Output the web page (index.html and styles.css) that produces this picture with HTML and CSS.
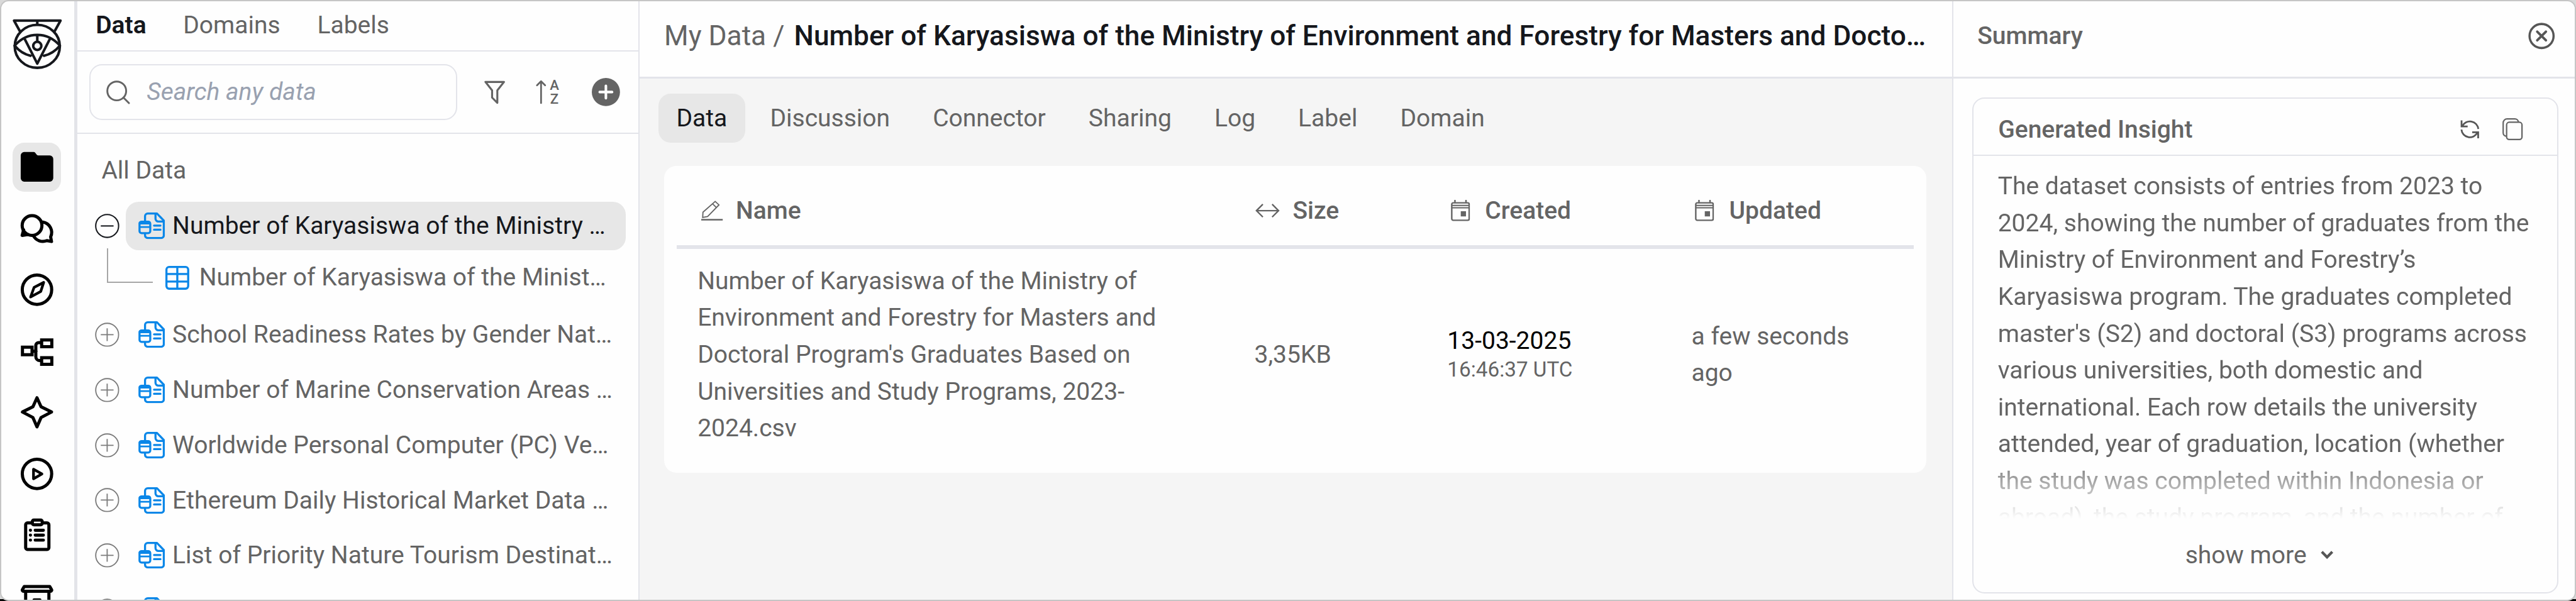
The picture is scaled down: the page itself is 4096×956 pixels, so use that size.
FILE: index.html
```html
<!DOCTYPE html>
<html lang="en">
<head>
<meta charset="utf-8">
<title>My Data</title>
<link rel="stylesheet" href="styles.css">
</head>
<body>
<svg class="defs" width="0" height="0">
  <symbol id="doc" viewBox="0 0 46 46"><g fill="none" stroke="#0b87e8" stroke-width="3.6" stroke-linecap="round" stroke-linejoin="round"><path d="M11.5 14V6.5a4.7 4.7 0 0 1 4.700-4.700H32L43.800 14v25.500a4.500 4.500 0 0 1-4.500 4.500H16a4.500 4.500 0 0 1-4.500-4.500V37"/><path d="M29.500 2.500v8a5 5 0 0 0 5 5H43"/><path d="M27 22.500h11M27 29.700h11"/><rect x="2" y="16" width="18.500" height="19.500" rx="3.500"/><path d="M3 18h16" stroke-width="5"/><path d="M3 25h16" stroke-width="3"/></g></symbol>
  <symbol id="plus" viewBox="0 0 42 42"><g fill="none" stroke="#7b7b7b" stroke-width="2"><circle cx="21" cy="21" r="19.700"/><path d="M10 21h22M21 10v22"/></g></symbol>
  <symbol id="cal" viewBox="0 0 33 37"><g fill="none" stroke="#646464" stroke-width="2.600"><rect x="1.500" y="5" width="30" height="30" rx="2.500"/><path d="M1.500 9.500h30M1.500 13.500h30" stroke-width="2"/><path d="M7 0v5M26 0v5"/></g><path d="M17 19.500h9v9h-9z" fill="#646464"/></symbol>
</svg>
<div class="window">
  <nav class="rail">
    <svg class="logo" viewBox="21 32 85 87"><g fill="none" stroke="#15171c" stroke-width="4.400" stroke-linejoin="round" stroke-linecap="round"><path d="M33.500 53L23.500 35h80L93.500 53M63.500 35v7"/><ellipse cx="63.500" cy="79.300" rx="38.800" ry="37"/><path d="M24.500 78Q41 59.500 63.500 59.500T102.500 78Q91 92 75 95.500M24.500 78Q36 92 52 95.500M41.500 66l22 43 22-43M63.500 60v11"/><circle cx="63.500" cy="78.500" r="7"/></g></svg>
    <div class="rail-items">
      <a class="rail-item on"><svg viewBox="0 0 84 84"><path fill="#000" d="M14 22a6 6 0 0 1 6-6h16.500c3 0 4.500 6 7.500 6h20a6 6 0 0 1 6 6v33a6 6 0 0 1-6 6H20a6 6 0 0 1-6-6z"/></svg></a>
      <a class="rail-item"><svg viewBox="0 0 84 84"><circle cx="33.500" cy="36.500" r="17"/><path d="M19 44l-2.500 9.500 10-1.500M52 30.500A18 18 0 0 1 65.500 56l1.500 8-8-1.500A18.500 18.500 0 0 1 36 54.500"/></svg></a>
      <a class="rail-item"><svg viewBox="0 0 84 84"><circle cx="42" cy="42" r="25.300"/><path stroke-width="4.600" d="M53.500 29.500L48.500 45 31 54.500 37 38z"/><path fill="#fff" stroke="none" d="M44.500 39l-1 5.500-4 2.500 1-5z"/></svg></a>
      <a class="rail-item"><svg viewBox="0 0 84 84"><path d="M17 35h16.500v13H17zM50 22.500h17.500V34H50zM50 53h17.500v11.500H50zM33.500 42h7M50 27h-5a5 5 0 0 0-5 5v19a7 7 0 0 0 7 7h3" stroke-linejoin="miter"/></svg></a>
      <a class="rail-item"><svg viewBox="0 0 84 84"><path d="M42 17l7 15.500 18 9-18 9.500-7 16-7-16-18-9.500 18-9z"/></svg></a>
      <a class="rail-item"><svg viewBox="0 0 84 84"><circle cx="42" cy="42" r="25.300"/><path stroke-width="4.600" d="M36 34v16.500L50.500 42z"/></svg></a>
      <a class="rail-item"><svg viewBox="0 0 84 84"><path d="M33 21.500h-7.500a3 3 0 0 0-3 3V64a3 3 0 0 0 3 3h34a3 3 0 0 0 3-3V24.500a3 3 0 0 0-3-3H52" /><rect x="34" y="16.500" width="17" height="8" rx="2.500"/><path d="M39 34h14M39 42.500h14M39 51h14M30.700 34h.1M30.700 42.500h.1M30.700 51h.1"/></svg></a>
      <a class="rail-item"><svg viewBox="0 0 84 84"><path d="M20 25h44l3 5a2 2 0 0 1-2 3H19a2 2 0 0 1-2-3zM22.500 34v26h40V34M37 48h10"/></svg></a>
    </div>
  </nav>

  <aside class="sidebar">
    <div class="side-tabs"><span class="on">Data</span><span>Domains</span><span>Labels</span></div>
    <div class="side-tools">
      <div class="search"><svg class="mag" viewBox="0 0 41 41"><g fill="none" stroke="#646464" stroke-width="3.200" stroke-linecap="round"><circle cx="18" cy="18" r="16.200"/><path d="M29.500 29.500l9.500 9.500"/></g></svg><span>Search any data</span></div>
      <svg class="filter" viewBox="0 0 36 41"><path fill="none" stroke="#646464" stroke-width="3.400" stroke-linejoin="round" d="M2 2.500h32L22.500 17v21.500l-9-9V17z"/></svg>
      <svg class="sort" viewBox="0 0 40 42"><path fill="none" stroke="#646464" stroke-width="3" stroke-linecap="round" stroke-linejoin="round" d="M9 40V3M2 9.500L9 2.500l7 7"/><text x="24" y="17.500">A</text><text x="24.500" y="41">Z</text></svg>
      <svg class="add" viewBox="0 0 48 48"><circle cx="24" cy="24" r="24" fill="#646464"/><path d="M24 13.500v21M13.500 24h21" stroke="#fff" stroke-width="4.400" stroke-linecap="round"/></svg>
    </div>
    <div class="tree">
      <div class="tree-title">All Data</div>
      <div class="row"><svg class="tog" viewBox="0 0 42 42"><g fill="none" stroke="#15171c" stroke-width="2.200"><circle cx="21" cy="21" r="19.700"/><path d="M10 21h22"/></g></svg><div class="item on"><svg class="doc"><use href="#doc"/></svg><span>Number of Karyasiswa of the Ministry …</span></div></div>
      <div class="child"><div class="elbow"></div><svg class="tbl" viewBox="0 0 41 41"><g fill="none" stroke="#0b87e8" stroke-width="3.600"><rect x="1.800" y="1.800" width="37.400" height="37.400" rx="4.500"/><path d="M2 14h37M2 27h37M20.500 2v37"/></g></svg><span>Number of Karyasiswa of the Minist…</span></div>
      <div class="rows">
        <div class="row"><svg class="tog"><use href="#plus"/></svg><div class="item"><svg class="doc"><use href="#doc"/></svg><span>School Readiness Rates by Gender Nat…</span></div></div>
        <div class="row"><svg class="tog"><use href="#plus"/></svg><div class="item"><svg class="doc"><use href="#doc"/></svg><span>Number of Marine Conservation Areas …</span></div></div>
        <div class="row"><svg class="tog"><use href="#plus"/></svg><div class="item"><svg class="doc"><use href="#doc"/></svg><span>Worldwide Personal Computer (PC) Ve…</span></div></div>
        <div class="row"><svg class="tog"><use href="#plus"/></svg><div class="item"><svg class="doc"><use href="#doc"/></svg><span>Ethereum Daily Historical Market Data …</span></div></div>
        <div class="row"><svg class="tog"><use href="#plus"/></svg><div class="item"><svg class="doc"><use href="#doc"/></svg><span>List of Priority Nature Tourism Destinat…</span></div></div>
        <div class="row"><svg class="tog"><use href="#plus"/></svg><div class="item"><svg class="doc"><use href="#doc"/></svg></div></div>
      </div>
    </div>
  </aside>

  <main class="main">
    <header class="crumbs"><span>My Data /</span> <b>Number of Karyasiswa of the Ministry of Environment and Forestry for Masters and Docto…</b></header>
    <div class="tabs"><span class="on">Data</span><span>Discussion</span><span>Connector</span><span>Sharing</span><span>Log</span><span>Label</span><span>Domain</span></div>
    <section class="table">
      <div class="thead">
        <div><svg class="i-name" viewBox="0 0 37 35"><g fill="none" stroke="#646464" stroke-width="2"><path d="M3 20L24 1.500l6.500 6L11 27.500 2.500 29zM19.500 5.500l6.500 6.500"/><path d="M0 33h37" stroke-width="2.800"/></g></svg><span>Name</span></div>
        <div><svg class="i-size" viewBox="0 0 42 24"><path fill="none" stroke="#646464" stroke-width="2.600" d="M2 12h38M13 1L2 12l11 11M29 1l11 11-11 11"/></svg><span>Size</span></div>
        <div><svg class="i-cal"><use href="#cal"/></svg><span>Created</span></div>
        <div><svg class="i-cal"><use href="#cal"/></svg><span>Updated</span></div>
      </div>
      <div class="tbody">
        <div>Number of Karyasiswa of the Ministry of<br>Environment and Forestry for Masters and<br>Doctoral Program's Graduates Based on<br>Universities and Study Programs, 2023-<br>2024.csv</div>
        <div>3,35KB</div>
        <div class="stamp"><span class="date">13-03-2025</span><span class="time">16:46:37 UTC</span></div>
        <div>a few seconds<br>ago</div>
      </div>
    </section>
  </main>

  <aside class="summary">
    <header class="sum-head"><b>Summary</b><svg class="close" viewBox="0 0 46 46"><g fill="none" stroke="#565656" stroke-linecap="round"><circle cx="23" cy="23" r="20.700" stroke-width="3.800"/><path stroke-width="4.200" d="M15.500 15.500l15 15M30.500 15.500l-15 15"/></g></svg></header>
    <section class="insight">
      <div class="in-head"><b>Generated Insight</b>
        <svg class="refresh" viewBox="0 0 33 34"><path fill="none" stroke="#565656" stroke-width="3" d="M2.200 1.500v10.500h10.500M3.500 11.500A14.500 14.500 0 0 1 31 16.500M30.800 32.500V22H20.500M29.500 22.500A14.500 14.500 0 0 1 2 17.500"/></svg>
        <svg class="copy" viewBox="0 0 35 38"><g fill="none" stroke="#646464" stroke-width="2.400"><rect x="7.200" y="7" width="26.500" height="29.700" rx="4.500"/><path d="M7 31a5.500 5.500 0 0 1-5.700-5.500V8a6.700 6.700 0 0 1 6.700-6.700h13.500a6 6 0 0 1 6 5.500"/></g></svg>
      </div>
      <p class="in-text">The dataset consists of entries from 2023 to<br>2024, showing the number of graduates from the<br>Ministry of Environment and Forestry’s<br>Karyasiswa program. The graduates completed<br>master's (S2) and doctoral (S3) programs across<br>various universities, both domestic and<br>international. Each row details the university<br>attended, year of graduation, location (whether<br>the study was completed within Indonesia or<br>abroad), the study program, and the number of</p>
      <div class="more"><span>show more</span><svg class="chev" viewBox="0 0 22 15"><path fill="none" stroke="#565656" stroke-width="4.600" d="M2 2l9 9 9-9"/></svg></div>
    </section>
  </aside>
</div>
</body>
</html>
```

FILE: styles.css
```css
/* 1rem is ten design units; the design is 443.2rem wide */
html { font-size: 9.2419px; }
* { box-sizing: border-box; }
body {
  margin: 0;
  height: 100vh;
  overflow: hidden;
  background: linear-gradient(#d9d9d9 0 99.7%, #000 99.7%);
  font-family: Roboto, "Liberation Sans", sans-serif;
  font-size: 4.224rem;
  line-height: 6.336rem;
  color: #646464;
  white-space: nowrap;
}
svg { display: block; flex: none; overflow: visible; }
.defs { position: absolute; }
b { font-weight: 500; }

.window {
  display: flex;
  width: 100vw;
  height: 100vh;
  overflow: hidden;
  border: 2px solid #c5c5c5;
  border-radius: 1.5rem;
  background: #fefefe;
}

/* icon rail */
.rail { flex: none; width: 13.05rem; border-right: 5px solid #e3e4e9; padding: 3rem 0 0 1.92rem; }
.logo { width: 8.5rem; height: 8.7rem; }
.rail-items { display: flex; flex-direction: column; gap: 2.15rem; margin-top: 12.7rem; }
.rail-item { flex: none; width: 8.4rem; height: 8.4rem; border-radius: 2rem; }
.rail-item.on { background: #e7e7e7; }
.rail-item svg {
  width: 8.4rem; height: 8.4rem;
  fill: none; stroke: #000; stroke-width: 5.4; stroke-linecap: round; stroke-linejoin: round;
}
.rail-item.on svg { stroke: none; }

/* data sidebar */
.sidebar { flex: none; width: 96.8rem; border-right: 2px solid #e3e4ea; display: flex; flex-direction: column; }
.side-tabs { display: flex; gap: 6.35rem; height: 8.65rem; flex: none; padding: 0.95rem 0 0 3.2rem; border-bottom: 2px solid #e3e4ea; }
.side-tabs .on { color: #15171c; font-weight: 600; }
.side-tools { display: flex; align-items: center; height: 14.2rem; flex: none; padding-left: 2.15rem; border-bottom: 2px solid #e3e4ea; }
.search { display: flex; align-items: center; width: 63.3rem; height: 9.6rem; border: 2px solid #e3e4ea; border-radius: 2.2rem; padding-left: 2.7rem; font-style: italic; color: #99a1b0; }
.mag { width: 4.1rem; height: 4.1rem; margin-right: 2.8rem; }
.filter { width: 3.6rem; height: 4.1rem; margin-left: 4.6rem; }
.sort { width: 4rem; height: 4.2rem; margin-left: 5.3rem; }
.sort text { font-size: 24px; font-weight: 500; fill: #646464; }
.add { width: 4.85rem; height: 4.85rem; margin-left: 5.6rem; }

.tree-title { padding: 3.15rem 0 0 4.2rem; height: 11.65rem; }
.row { display: flex; align-items: center; height: 8.4rem; padding-left: 3.1rem; }
.tog { width: 4.2rem; height: 4.2rem; margin-right: 1.1rem; }
.item { display: flex; align-items: center; width: 86rem; height: 8.4rem; border-radius: 2.2rem; padding-left: 2.1rem; }
.item.on { background: #e7e7e7; color: #15171c; }
.doc { width: 4.6rem; height: 4.6rem; margin-right: 1.3rem; }
.child { display: flex; align-items: center; height: 9.35rem; padding-left: 5.15rem; }
.elbow { width: 7.85rem; height: 6rem; margin: -4.2rem 2.15rem 0 0; border: solid #a6a6a6; border-width: 0 0 2px 2px; }
.tbl { width: 4.1rem; height: 4.1rem; margin-right: 1.75rem; }
.rows { display: flex; flex-direction: column; gap: 1.1rem; margin-top: 0.95rem; }

/* main pane */
.main { flex: none; width: 226rem; border-right: 2px solid #e3e4ea; background: #f5f5f5; }
.crumbs { height: 13.35rem; padding: 2.8rem 0 0 4.2rem; background: #fefefe; border-bottom: 3px solid #e3e4ea; font-size: 4.787rem; }
.crumbs b { color: #15171c; margin-left: 0.45rem; }
.tabs { display: flex; margin: 2.55rem 0 0 3.2rem; }
.tabs span { height: 8.4rem; line-height: 8.5rem; padding: 0 3.68rem; border-radius: 2.1rem; }
.tabs .on { background: #e7e7e7; color: #15171c; padding: 0 3.1rem; margin-right: 0.6rem; }
.table { width: 217.2rem; height: 52.8rem; margin: 4.1rem 0 0 4.2rem; padding: 0 2.15rem; border-radius: 2.1rem; background: #fefefe; }
.thead, .tbody { display: grid; grid-template-columns: 95.8rem 33.2rem 42rem 1fr; padding-left: 3.6rem; }
.thead { height: 14.2rem; padding-top: 4.5rem; font-weight: 500; border-bottom: 6px solid #e3e4ea; }
.thead > div { display: flex; align-items: center; height: 6.336rem; }
.i-name { width: 3.7rem; height: 3.5rem; margin: 0 2.3rem 0 0.6rem; }
.i-size { width: 4.2rem; height: 2.4rem; margin: 0 2.2rem 0 0.2rem; }
.i-cal { width: 3.3rem; height: 3.7rem; margin: 0 2.6rem 0 0.6rem; }
.tbody { align-items: center; padding-top: 2.4rem; }
.stamp { display: flex; flex-direction: column; }
.stamp .date { color: #000; line-height: 5rem; }
.stamp .time { font-size: 3.6rem; line-height: 4.7rem; }

/* summary pane */
.summary { flex: 1; min-width: 0; }
.sum-head { display: flex; justify-content: space-between; align-items: flex-start; height: 13.35rem; padding: 2.8rem 3.4rem 0 4.15rem; border-bottom: 3px solid #e3e4ea; }
.close { width: 4.6rem; height: 4.6rem; margin-top: 0.85rem; }
.insight { width: 100.8rem; height: 85.35rem; margin: 3.2rem 0 0 3.3rem; border: 2px solid #e3e4ea; border-radius: 2.1rem; }
.in-head { display: flex; align-items: center; height: 9.9rem; padding: 0.9rem 5.9rem 0 4.2rem; border-bottom: 2px solid #e3e4ea; }
.refresh { width: 3.3rem; height: 3.4rem; margin-left: auto; }
.copy { width: 3.5rem; height: 3.8rem; margin-left: 4rem; }
.in-text { margin: 0; height: 62.4rem; padding: 2.05rem 0 0 4.15rem; overflow: hidden; -webkit-mask-image: linear-gradient(#000 82%, transparent 100%); mask-image: linear-gradient(#000 82%, transparent 100%); }
.more { display: flex; align-items: center; justify-content: center; margin-top: 3.1rem; padding-right: 2.1rem; }
.chev { width: 2.2rem; height: 1.5rem; margin-left: 2.4rem; }
```
